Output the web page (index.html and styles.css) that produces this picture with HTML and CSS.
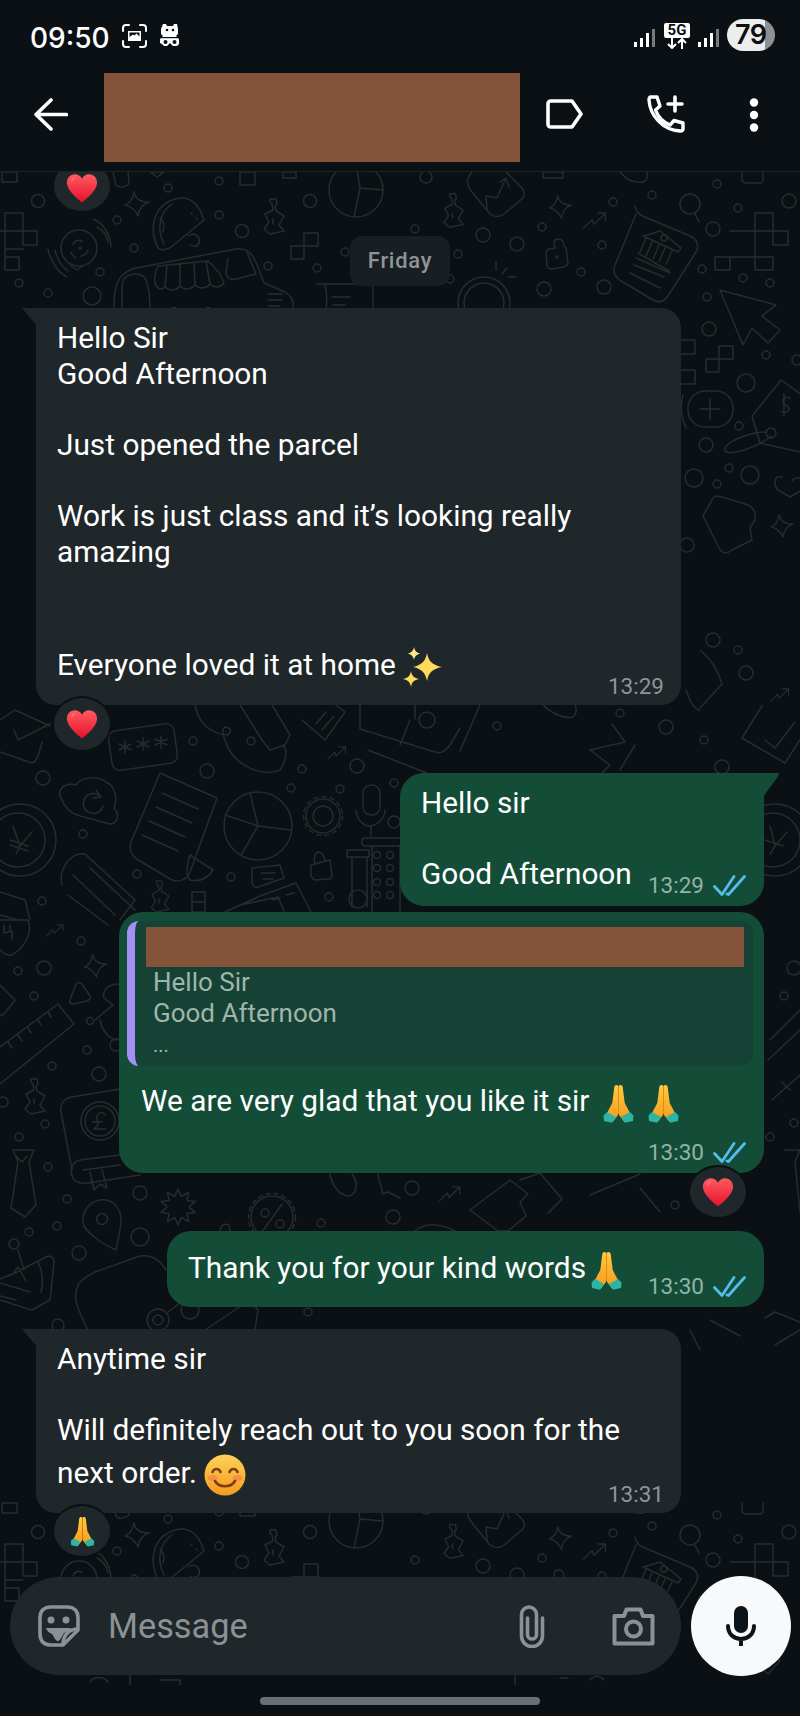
FILE: index.html
```html
<!DOCTYPE html>
<html lang="en">
<head>
<meta charset="utf-8">
<title>Chat</title>
<link rel="stylesheet" href="styles.css">
</head>
<body>
<svg class="defs" width="0" height="0" aria-hidden="true">
  <defs>
    <linearGradient id="heartFill" x1="0" y1="0" x2="0" y2="1"><stop offset="0" stop-color="#ff5a5f"/><stop offset="1" stop-color="#e8112d"/></linearGradient>
    <linearGradient id="handFill" x1="0" y1="0" x2="0" y2="1"><stop offset="0" stop-color="#ffcb3d"/><stop offset="1" stop-color="#f59a1e"/></linearGradient>
    <linearGradient id="smileFill" x1="0" y1="0" x2="0" y2="1"><stop offset="0" stop-color="#ffd257"/><stop offset="1" stop-color="#f49a20"/></linearGradient>
    <symbol id="e-heart" viewBox="0 0 32 30"><path fill="url(#heartFill)" d="M16 29.5C10 24 1 17.5.4 9.5.1 4 4 .3 8.600.3c3.200 0 5.900 1.700 7.400 4.700C17.500 2 20.200.3 23.400.3c4.600 0 8.500 3.700 8.200 9.200C31 17.500 22 24 16 29.500Z"/><path fill="#ff9a9c" opacity=".55" d="M5 6c1-2 3-3 5-2.500-2 .5-3 2-3.500 4-.5 1-2 0-1.500-1.500Z"/></symbol>
    <symbol id="e-pray" viewBox="0 0 32 39">
      <path fill="url(#handFill)" d="M15.600 1.500c-2-1.200-3.400-.3-3.800 1.500L9.800 19 5 28l-1.500 5.500 7 4 5-6.500Z"/>
      <path fill="url(#handFill)" d="M16.400 1.500c2-1.200 3.400-.3 3.800 1.500L22.200 19 27 28l1.500 5.500-7 4-5-6.500Z"/>
      <path fill="#e88a12" d="M15.500 2h1v28h-1z"/>
      <path fill="#2cb5a5" d="M4.500 28 1 31.500l.5 5.500 8 1.800 4-5.800Zm23 0 3.500 3.500-.5 5.500-8 1.800-4-5.800Z"/>
    </symbol>
    <symbol id="e-sparkle" viewBox="0 0 40 40">
      <path fill="#ffd95a" d="M24 6c1.500 8 5 12 15 14-10 2-13.500 6-15 14-1.500-8-5-12-14-14 9-2 12.500-6 14-14Z"/>
      <path fill="#ffe98c" d="M11 0c.8 4 2.500 5.500 6 6.500-3.500 1-5.200 2.500-6 6.500-.8-4-2.500-5.500-6-6.500 3.500-1 5.200-2.500 6-6.500Z"/>
      <path fill="#ffd95a" d="M8 24c.9 5 3 7 8 8-5 1-7.100 3-8 8-.9-5-3-7-8-8 5-1 7.100-3 8-8Z"/>
    </symbol>
    <symbol id="e-smile" viewBox="0 0 42 42">
      <circle cx="21" cy="21" r="20.500" fill="url(#smileFill)"/>
      <ellipse cx="8.500" cy="24" rx="5" ry="3" fill="#f8735a" opacity=".6"/><ellipse cx="33.500" cy="24" rx="5" ry="3" fill="#f8735a" opacity=".6"/>
      <path fill="none" stroke="#7a3e12" stroke-width="2.600" stroke-linecap="round" d="M8.500 18c1.500-4 6.500-4 8 0M25.500 18c1.500-4 6.500-4 8 0M11 27c4 7 16 7 20 0"/>
    </symbol>
    <symbol id="i-check" viewBox="0 0 33 21"><path fill="none" stroke="#53bdeb" stroke-width="2.800" stroke-linecap="round" stroke-linejoin="round" d="M1.500 11.500 9 19.500 21 1.500M14 19 15.500 19.500 31.500 1.500"/></symbol>
    <symbol id="i-signal" viewBox="0 0 21 18">
      <rect x="0" y="13" width="3" height="5" fill="#fff"/><rect x="6" y="9" width="3" height="9" fill="#fff"/><rect x="12" y="4" width="3" height="14" fill="#fff"/><rect x="18" y="0" width="3" height="18" fill="#77797b"/>
    </symbol>

    <symbol id="d-star" viewBox="0 0 26 26" overflow="visible"><path d="M10 1C11 7 16 11 25 11 18 13 15 18 14 25 12 20 7 15 1 14 6 12 9 7 10 1Z"/></symbol>
    <symbol id="d-bottle" viewBox="0 0 26 36" overflow="visible"><path d="M9 1h6l1 5-2 2 1 5 8 5-5 9 5 6-14 3-6-5 5-7-4-8 8-4-1-6-2-2Z"/><path d="M12 21v5"/></symbol>
    <symbol id="d-sq" viewBox="0 0 28 28" overflow="visible"><path d="M14 1h14v13H14zM1 14h13v13H1z"/></symbol>
    <symbol id="d-trend" viewBox="0 0 26 18" overflow="visible"><path d="M1 17 10 8l2 5L23 2M16 1h8v8"/></symbol>

    <g id="band" class="doodle">
      <!-- top band, repeats further down the wall -->
      <circle cx="38" cy="201" r="6.500"/><circle cx="168" cy="188" r="4"/><circle cx="219" cy="181" r="4"/><circle cx="219" cy="215" r="4"/><circle cx="310" cy="201" r="6.500"/><circle cx="117" cy="220" r="4"/><circle cx="242" cy="231" r="6.500"/><circle cx="134" cy="248" r="4"/><circle cx="100" cy="272" r="4"/><circle cx="19" cy="283" r="4"/><circle cx="48" cy="293" r="4"/><circle cx="92" cy="296" r="9"/><circle cx="268" cy="266" r="4"/><circle cx="317" cy="268" r="4"/><circle cx="345" cy="252" r="4"/>
      <circle cx="426" cy="177" r="6"/><circle cx="415" cy="229" r="4"/><circle cx="483" cy="235" r="7"/><circle cx="517" cy="244" r="7"/><circle cx="458" cy="254" r="4"/><circle cx="542" cy="227" r="4"/><circle cx="613" cy="202" r="4"/><circle cx="652" cy="195" r="4"/><circle cx="602" cy="245" r="4"/><circle cx="581" cy="272" r="4"/><circle cx="544" cy="289" r="7"/><circle cx="604" cy="287" r="7"/><circle cx="450" cy="279" r="4"/><circle cx="717" cy="184" r="4"/><circle cx="738" cy="208" r="4"/><circle cx="789" cy="201" r="7"/><circle cx="713" cy="229" r="7"/><circle cx="702" cy="269" r="4"/><circle cx="743" cy="278" r="4"/><circle cx="770" cy="283" r="4"/><circle cx="707" cy="297" r="4"/>
      <!-- cross tile left -->
      <path d="M5 213h18v18H5zM23 231h14v14H23zM5 231v18h18M5 257h14v13H5zM-5 231h10M5 249v8"/>
      <!-- star -->
      <use href="#d-star" x="124" y="191" width="26" height="26"/>
      <!-- taco -->
      <path d="M158 248C149 230 152 206 175 199 190 195 199 204 204 220L170 248C165 250 160 250 158 248Z"/>
      <path d="M164 244C156 228 160 212 172 204M160 218c3 3 5 8 3 14M191 213l1 1M196 218l1 1"/>
      <path d="M188 236c6-4 13 0 11 7-1 4-6 4-9 2"/>
      <!-- radio bubble -->
      <circle cx="79" cy="248" r="18"/><path d="M70 265 77 270 82 266M73 245c1-4 5-6 9-4M88 250c-1 3-3 6-7 6M71 252c1 3 3 5 5 6"/><path d="M93 219c10 4 17 14 18 28M97 227c6 3 10 9 11 15M48 249c3 14 11 24 19 28M55 250c2 9 7 17 13 21"/><circle cx="80" cy="248" r="1"/>
      <!-- truck -->
      <path d="M114 312C113 282 120 272 136 268L236 249C246 248 251 252 256 262L264 283 285 292C294 298 295 305 291 312"/>
      <path d="M228 259 226 272C226 278 230 280 236 279L256 274 247 252"/>
      <path d="M122 312V286C122 274 136 272 143 276 148 280 150 296 150 312"/>
      <path d="M155 283C154 275 156 270 158 266L208 261C216 268 222 276 224 283 220 288 214 288 210 284 206 289 199 289 195 285 191 290 184 290 180 286 176 291 169 291 165 287 161 291 157 289 155 283ZM167 265 165 287M180 263 180 286M194 262 195 285M206 261 210 284"/>
      <path d="M268 294h14M268 300h14M268 306h12"/>
      <path d="M170 312c1-6 7-6 9 0M204 312c1-6 7-6 9 0"/>
      <!-- bottle, pie, squares -->
      <use href="#d-bottle" x="261" y="198" width="26" height="36"/>
      <use href="#d-sq" x="290" y="232" width="28" height="28"/>
      <circle cx="356" cy="190" r="27"/><path d="M356 163 360 188 383 190M360 188 354 217M370 172l-2-14 18-2 6 10Z"/>
      <path d="M357 172c-1-4 0-8 3-8"/>
      <!-- clip at top -->
      <path d="M240 172h15v13h-15zM283 172h13v6h-13zM2 172h15v10H2zM113 172l3 13c2 3 8 3 13-1l-1-12"/>
      <path d="M150 172h14l-7 5Z"/>
      <!-- chart card -->
      <path d="M472 172C466 180 466 184 472 192L490 214C496 218 500 217 504 214L523 198C525 194 525 192 522 188L506 172"/>
      <path d="M487 209 486 196 497 198 506 178M500 182l6-4 3 9"/>
      <use href="#d-bottle" x="441" y="192" width="25" height="36"/>
      <use href="#d-star" x="548" y="195" width="25" height="24"/>
      <use href="#d-trend" x="582" y="212" width="26" height="17"/>
      <!-- lock -->
      <path d="M555 240c6-3 9 1 9 6l2 2 2 14c0 3-2 4-4 5l-12 2c-3 0-5-1-5-4l-1-12c0-2 2-4 4-4l5-1c-1-3-1-7 0-8Z"/><circle cx="557" cy="257" r="1"/>
      <!-- magnifier -->
      <circle cx="690" cy="204" r="10"/><path d="M695 214 699 222"/>
      <!-- bank doc -->
      <path d="M635 206C637 214 640 215 645 217L690 236C698 240 699 246 696 252L668 296C664 302 659 303 653 300L621 281C614 276 612 271 615 265L636 214"/>
      <path d="M644 236 660 231 681 248 678 252 643 236ZM646 238 640 252M652 242 646 256M659 245 653 259M665 248 659 262M672 251 666 264M638 253 669 271M636 258 670 273M634 265 664 277M630 273 660 288"/>
      <circle cx="664" cy="238" r="3"/>
      <!-- cross tile right -->
      <path d="M755 213h18v18h-18zM773 231h15v14h-15zM730 231h25v26M755 231v26h18v13h-18v-13h-40v13h15v-13"/>
      <!-- clips -->
      <path d="M742 172v7c0 3 2 4 5 4h13c2 0 3-2 3-4v-7"/>
      <path d="M620 172l6 6c3 3 12 5 17 4 3-1 4-3 4-6v-4"/>
      <path d="M543 172h20v6h-20z"/>
      <!-- cursor -->
      <path d="M720 290 776 305 762 316 780 330 768 343 752 328 743 345Z"/>
      <!-- ring with rays -->
      <circle cx="484" cy="303" r="26"/><circle cx="484" cy="303" r="20"/><path d="M496 262v8M507 268l-5 6M516 277h-8"/>
      <!-- message -->
      <path d="M317 284h52c3 0 4 2 4 5v21M325 284c1 6 3 12 1 26M350 297h-18M345 305h-12"/>
    </g>
  </defs>
</svg>

<main class="phone">
  <div class="status">
    <div class="status-left">
      <span class="clock">09:50</span>
      <svg class="ic-shot" viewBox="0 0 25 24"><path fill="none" stroke="#fff" stroke-width="2" stroke-linecap="round" d="M1 7V4c0-2 1-3 3-3h3M18 1h3c2 0 3 1 3 3v3M24 17v3c0 2-1 3-3 3h-3M7 23H4c-2 0-3-1-3-3v-3"/><path fill="#fff" d="M6 7h13v10H6z"/><path fill="#0b1014" d="M7.500 8.500h10v4l-3-3-2 2-1.500-1-3.500 2.500Z"/></svg>
      <svg class="ic-pet" viewBox="0 0 20 24"><path fill="#fff" d="M3 0h3l1 2h6l1-2h3l1 5v5l-2 2 3 3v5l-2 2h-4l-3-3-3 3H4l-2-2-2-1v-4l3-3-2-2V5Z"/><circle cx="7" cy="6" r="1.300" fill="#0b1014"/><circle cx="13" cy="6" r="1.300" fill="#0b1014"/><path fill="#0b1014" d="M1 13h18v1.200H1z"/><circle cx="5.500" cy="18" r="2" fill="#0b1014"/><circle cx="14.500" cy="18" r="2" fill="#0b1014"/></svg>
    </div>
    <div class="status-right">
      <svg class="ic-signal"><use href="#i-signal"/></svg>
      <div class="fiveg">
        <span class="fiveg-label">5G</span>
        <svg class="fiveg-arrows" viewBox="0 0 22 11"><path fill="none" stroke="#fff" stroke-width="2" d="M6 0v10M2 6l4 4 4-4M16 11V1M12 5l4-4 4 4"/></svg>
      </div>
      <svg class="ic-signal"><use href="#i-signal"/></svg>
      <div class="battery">79</div>
    </div>
  </div>

  <header class="topbar">
    <svg class="ic-back" viewBox="0 0 34 33"><path fill="none" stroke="#fff" stroke-width="3.600" stroke-linecap="round" stroke-linejoin="round" d="M17 2 2 16.500 17 31M2.500 16.500H32.500"/></svg>
    <div class="redact redact-title"></div>
    <svg class="ic-label" viewBox="0 0 37 30"><path fill="none" stroke="#fff" stroke-width="3.600" stroke-linejoin="round" d="M5 2H26L35 15 26 28H5C3 28 2 27 2 25V5C2 3 3 2 5 2Z"/></svg>
    <svg class="ic-call" viewBox="0 0 38 38"><path fill="none" stroke="#fff" stroke-width="3.400" stroke-linejoin="round" d="M4 2H10L13 11 8.500 15C11 22 16 27 23 30L27 25.500 36 28V34C36 35.500 35 36 33 36 16 35 3 21 2 5 2 3 3 2 4 2Z"/><path fill="none" stroke="#fff" stroke-width="3.600" stroke-linecap="round" d="M28 2V16M21 9H35"/></svg>
    <svg class="ic-more" viewBox="0 0 10 34"><circle cx="5" cy="4.500" r="4.200" fill="#fff"/><circle cx="5" cy="17" r="4.200" fill="#fff"/><circle cx="5" cy="29.500" r="4.200" fill="#fff"/></svg>
  </header>

  <section class="chat">
    <svg class="wall" viewBox="0 172 800 1513" aria-hidden="true">
      <use href="#band"/>
      <use href="#band" y="1331"/>
      <g class="doodle">
        <!-- right strip -->
        <use href="#d-sq" x="705" y="345" width="28" height="28"/>
        <path d="M680 340h15v14h-15zM680 370h15v14h-15z"/>
        <circle cx="709" cy="329" r="7"/><circle cx="766" cy="355" r="4"/><circle cx="746" cy="383" r="9"/><circle cx="739" cy="426" r="4"/><circle cx="706" cy="445" r="7"/><circle cx="729" cy="468" r="4"/><circle cx="750" cy="475" r="9"/><circle cx="694" cy="478" r="9"/><circle cx="717" cy="484" r="4"/><circle cx="687" cy="545" r="7"/><circle cx="797" cy="360" r="5"/>
        <rect x="688" y="391" width="45" height="36" rx="17"/><path d="M700 409h20M710 399v20"/>
        <path d="M683 395c-3 10-2 22 3 33"/>
        <path d="M781 380 802 395M781 380 752 416 760 443 800 452"/><path d="M790 398c-4-2-8 0-7 4 1 4 7 3 6 8-1 3-6 3-8 1M784 394v22"/>
        <circle cx="771" cy="433" r="5"/><path d="M767 432C750 432 724 442 725 450 727 458 760 446 771 436"/>
        <path d="M782 477C774 474 773 485 778 490L790 497 802 490"/><path d="M802 479c-5-3-9 0-10 2"/>
        <path d="M713 498 703 516 718 546C722 555 727 554 732 550L752 540 750 528 755 520C757 510 750 505 745 504L722 497C718 496 715 495 713 498Z"/>
        <use href="#d-star" x="770" y="514" width="24" height="24"/>
        <path d="M700 650c10 8 18 20 22 34l-22 24M686 690c4 12 8 20 14 20"/>
        <use href="#d-trend" x="770" y="688" width="20" height="14"/>
        <circle cx="738" cy="650" r="4"/><circle cx="713" cy="640" r="7"/><circle cx="746" cy="673" r="7"/><circle cx="704" cy="740" r="4"/><circle cx="666" cy="727" r="7"/><circle cx="722" cy="767" r="7"/><circle cx="620" cy="713" r="4"/><circle cx="497" cy="726" r="4"/>
        <path d="M762 706 742 738 785 763 805 732"/><path d="M765 740 775 748 795 722"/>
        <!-- band under the first bubble -->
        <path d="M0 720 15 710 50 726M0 752 32 763C36 762 38 758 42 742M14 730 18 740 50 724"/>
        <rect x="110" y="727" width="66" height="40" rx="8" transform="rotate(-8 143 747)"/>
        <path d="M125 741v12M119 744l12 6M119 750l12-6M143 738v12M137 741l12 6M137 747l12-6M161 736v12M155 739l12 6M155 745l12-6"/>
        <circle cx="193" cy="741" r="4"/><circle cx="251" cy="741" r="4"/><circle cx="207" cy="771" r="7"/><circle cx="302" cy="769" r="4"/><circle cx="357" cy="766" r="7"/><circle cx="291" cy="788" r="4"/><circle cx="340" cy="789" r="4"/><circle cx="394" cy="783" r="4"/><circle cx="394" cy="822" r="6"/><circle cx="83" cy="834" r="4"/><circle cx="137" cy="874" r="4"/><circle cx="231" cy="877" r="4"/><circle cx="42" cy="901" r="4"/><circle cx="329" cy="897" r="4"/><circle cx="43" cy="778" r="7"/>
        <path d="M195 705C198 722 210 734 228 735 232 730 230 728 226 727 222 727 222 733 225 740 232 765 262 778 280 770 286 762 288 750 283 745"/>
        <path d="M240 705 262 740 270 750 285 745 290 735 272 705"/>
        <path d="M302 720 325 740 345 712 336 705M316 724 326 712M322 730 334 716"/>
        <use href="#d-trend" x="327" y="742" width="20" height="22"/>
        <path d="M360 705v24L435 752C440 754 445 752 450 745L460 728M368 750 470 790M480 705l-20 46"/>
        <path d="M410 720 400 745M415 705v14"/>
        <circle cx="427" cy="720" r="8"/>
        <path d="M543 705c8 8 20 14 30 12 4-4 4-8 2-12"/>
        <path d="M612 724 625 742 590 750 610 765 590 785M635 745 620 770"/>
        <!-- coin -->
        <circle cx="20" cy="840" r="36"/><circle cx="18" cy="840" r="27"/><path d="M13 826 20 846 32 832M20 846 16 854M10 840 28 846M10 845 28 851"/>
        <circle cx="775" cy="840" r="36"/><circle cx="773" cy="840" r="27"/><path d="M770 826 775 846 787 832M775 846 770 854M765 840 783 846"/>
        <!-- cloud -->
        <path d="M62 800C55 790 65 782 76 785 82 776 98 776 106 782 115 786 118 798 114 808 120 814 118 824 110 824L80 816C72 814 65 808 62 800Z"/>
        <path d="M100 796A10 10 0 1 0 103 806M96 790l5 7-8 1"/>
        <!-- receipt -->
        <path d="M160 773 217 798 190 872C186 881 178 882 172 880L138 860C131 855 129 848 131 842Z"/>
        <path d="M190 880c10 2 18-2 23-10L190 855C186 868 186 876 190 880Z"/>
        <path d="M162 793l36 16M156 807l36 16M149 821l36 16M142 835l36 16"/>
        <!-- pie -->
        <circle cx="258" cy="826" r="34"/><path d="M250 793 258 826 225 815M258 826 241 855M258 826 291 830"/>
        <!-- gear -->
        <circle cx="323" cy="816" r="10"/><circle cx="323" cy="816" r="17"/><circle cx="323" cy="816" r="19.500" stroke-dasharray="4 4.200"/>
        <!-- mic -->
        <rect x="363" y="785" width="17" height="30" rx="8"/><path d="M356 810c1 12 10 17 15 16s14-6 14-16M371 826v10"/>
        <!-- lock -->
        <path d="M311 865 330 860 332 875C332 878 330 879 328 879L316 880C313 880 312 878 311 875ZM315 864c-2-6 0-11 3-12 4 0 6 3 7 9"/>
        <!-- test tube and calculator -->
        <path d="M347 850h22v7h-22zM352 857v50M367 857v50"/><circle cx="358" cy="899" r="9"/>
        <rect x="362" y="838" width="50" height="8" rx="3"/>
        <path d="M372 846v66M400 846v66"/>
        <circle cx="377" cy="855" r="3.500"/><circle cx="390" cy="855" r="3.500"/><circle cx="377" cy="868" r="3.500"/><circle cx="390" cy="868" r="3.500"/><circle cx="377" cy="882" r="3.500"/><circle cx="390" cy="882" r="3.500"/><circle cx="377" cy="895" r="3.500"/><circle cx="390" cy="895" r="3.500"/>
        <!-- pencil -->
        <path d="M62 885C58 870 70 852 85 854L135 900 120 920M68 895 108 925M90 868 135 910M73 875 115 915"/>
        <!-- small bottle -->
        <use href="#d-bottle" x="148" y="880" width="24" height="32"/>
        <path d="M192 892h13v20h-13zM192 902h13"/>
        <!-- register -->
        <path d="M252 868 280 865 284 878 258 887C254 888 252 885 252 882ZM261 873h14M263 879h10"/>
        <path d="M225 912 260 896 296 883 311 912M240 905l38-8 6 14M272 900l8-2M286 895l8-2"/>
        <path d="M0 892 25 900 30 920M0 915 18 920"/>
        <!-- left column below -->
        <path d="M0 920 28 920C32 930 28 945 12 955 8 956 3 953 0 950"/>
        <path d="M4 925v8l8-2v8M10 925v6"/>
        <use href="#d-trend" x="42" y="924" width="26" height="13"/>
        <circle cx="81" cy="941" r="4"/><circle cx="44" cy="968" r="7"/><circle cx="18" cy="971" r="4"/><circle cx="34" cy="996" r="4"/><circle cx="87" cy="1050" r="4"/><circle cx="52" cy="1066" r="4"/><circle cx="99" cy="1074" r="7"/><circle cx="3" cy="1102" r="5"/><circle cx="45" cy="1124" r="4"/><circle cx="19" cy="1137" r="4"/><circle cx="48" cy="1167" r="4"/><circle cx="67" cy="1199" r="4"/><circle cx="140" cy="1193" r="7"/><circle cx="57" cy="1226" r="4"/><circle cx="29" cy="1232" r="4"/><circle cx="140" cy="1237" r="9"/><circle cx="79" cy="1253" r="7"/>
        <use href="#d-star" x="83" y="954" width="25" height="24"/>
        <path d="M76 984C78 982 80 982 82 984L90 996C91 999 89 1000 87 1001L73 1004C70 1004 69 1002 70 1000Z"/>
        <path d="M0 985 15 1000 4 1014 0 1016"/>
        <path d="M0 1047 58 1004 74 1024 0 1084M8 1042l4 6M18 1035l4 6M28 1028l3 5M38 1020l3 5M48 1012l3 5"/>
        <path d="M120 984C108 984 102 990 104 998L113 1005 95 1020"/><circle cx="90" cy="1021" r="3.500"/><circle cx="116" cy="1045" r="6"/><path d="M100 1020c2 10 8 18 16 20"/>
        <use href="#d-bottle" x="22" y="1078" width="26" height="36"/>
        <path d="M120 1089 72 1097C64 1098 60 1104 61 1112L72 1170"/>
        <circle cx="100" cy="1121" r="19"/><circle cx="100" cy="1121" r="15"/><path d="M105 1115c-2-4-8-3-8 2l1 8-4 4h12M93 1122h9"/>
        <path d="M120 1155 80 1160C72 1162 70 1170 72 1176 74 1182 80 1184 88 1183L140 1175M83 1170 120 1165M90 1172 94 1190 100 1184 107 1188 102 1170"/>
        <path d="M13 1150h21l-5 12 7 43-11 12-14-9 7-46ZM16 1156l6 6 5-6"/>
        <path d="M100 1200C112 1198 122 1208 121 1222 120 1232 118 1240 116 1250 106 1246 90 1236 84 1226 80 1214 88 1202 100 1200Z"/><circle cx="102" cy="1219" r="5.500"/>
        <path d="M0 1279 17 1272 48 1256C52 1256 54 1258 54 1262L50 1300 32 1310 0 1300M0 1283 30 1292M0 1296 16 1300M38 1262c4 8 6 20 3 30M12 1275l6-8M18 1267l8 14"/>
        <circle cx="14" cy="1244" r="5"/><path d="M18 1250 24 1270"/>
        <!-- rounded card -->
        <path d="M88 1330C78 1310 72 1298 78 1285 82 1278 88 1276 95 1272L140 1256C152 1254 160 1260 166 1270"/>
        <circle cx="158" cy="1320" r="11"/><circle cx="158" cy="1320" r="5"/><path d="M168 1312 184 1300 176 1298"/>
        <circle cx="190" cy="1310" r="9"/>
        <path d="M205 1330 250 1300 258 1310 255 1330"/>
        <!-- band above thanks -->
        <path transform="translate(178 1207)" d="M0-18 3.400-10.500 10.600-14.600 8.900-6.500 17.100-5.600 11 0 17.100 5.600 8.900 6.500 10.600 14.600 3.400 10.500 0 18-3.400 10.500-10.600 14.600-8.900 6.500-17.100 5.600-11 0-17.100-5.600-8.900-6.500-10.600-14.600-3.400-10.500Z"/>
        <circle cx="272" cy="1217" r="21"/><circle cx="272" cy="1217" r="23.500" stroke-dasharray="4 4"/><path d="M282 1204 262 1232"/><circle cx="265" cy="1213" r="4"/><circle cx="280" cy="1224" r="4"/>
        <circle cx="321" cy="1223" r="4"/><circle cx="393" cy="1217" r="7"/><circle cx="412" cy="1188" r="7"/><circle cx="308" cy="1312" r="4"/><circle cx="58" cy="1325" r="6"/><circle cx="675" cy="1205" r="4"/>
        <path d="M220 1231c1-6 5-8 9-6l1 6"/>
        <path d="M330 1174c2 10 8 22 20 22 8-4 8-14 2-22"/>
        <path d="M378 1174c0 10 6 14 4 20l6-2 12 6M415 1231c10-8 24-8 40 0"/>
        <use href="#d-trend" x="437" y="1186" width="26" height="16"/>
        <path d="M470 1210l40-30 18 14-8 8 6 14-18 15h-10Z"/>
        <path d="M520 1180l20-7 22 26-14 14"/>
        <path d="M590 1195 640 1174M640 1188 660 1212M785 1150h15l-5 12 5 50"/>
        <circle cx="784" cy="996" r="4"/><circle cx="794" cy="968" r="7"/><circle cx="794" cy="1123" r="4"/><circle cx="770" cy="1137" r="4"/>
        <path d="M800 1010 770 1040M800 1030 768 1060M772 1100 800 1075M790 1090l-8-8"/>
        <path d="M765 1318 775 1312 800 1322M775 1345 800 1330"/>
        <path d="M690 1330 700 1350M710 1320l30 16"/>
        <!-- strip below composer -->
        <path d="M90 1682c4-6 14-6 18 0M130 1675v10M160 1680h20v5M470 1672h45v13M560 1678h8M590 1680c4-5 10-5 14 0"/>
      </g>
    </svg>

    <div class="thread">
      <div class="react react-top"><svg class="em-heart"><use href="#e-heart"/></svg></div>
      <div class="date">Friday</div>

      <article class="bubble in in-first">
        <p>Hello Sir<br>Good Afternoon<br><br>Just opened the parcel<br><br>Work is just class and it’s looking really amazing<br><br><br></p>
        <p class="tall">Everyone loved it at home <svg class="em-inline em-sparkle"><use href="#e-sparkle"/></svg></p>
        <span class="time">13:29</span>
      </article>
      <div class="react react-in"><svg class="em-heart"><use href="#e-heart"/></svg></div>

      <article class="bubble out out-tail out-hello">
        <p>Hello sir<br><br>Good Afternoon</p>
        <span class="time">13:29<svg class="tick"><use href="#i-check"/></svg></span>
      </article>

      <article class="bubble out out-quote">
        <div class="quote">
          <div class="redact redact-quote"></div>
          <div class="quote-text">Hello Sir<br>Good Afternoon<br><span class="quote-more">...</span></div>
        </div>
        <p class="after-quote">We are very glad that you like it sir <svg class="em-inline em-pray em-gap"><use href="#e-pray"/></svg> <svg class="em-inline em-pray em-gap"><use href="#e-pray"/></svg></p>
        <span class="time">13:30<svg class="tick"><use href="#i-check"/></svg></span>
      </article>
      <div class="react react-out"><svg class="em-heart"><use href="#e-heart"/></svg></div>

      <article class="bubble out out-thanks">
        <p>Thank you for your kind words<svg class="em-inline em-pray em-tight"><use href="#e-pray"/></svg></p>
        <span class="time">13:30<svg class="tick"><use href="#i-check"/></svg></span>
      </article>

      <article class="bubble in in-last">
        <p>Anytime sir<br><br>Will definitely reach out to you soon for the</p>
        <p class="tall">next order. <svg class="em-inline em-smile"><use href="#e-smile"/></svg></p>
        <span class="time">13:31</span>
      </article>
      <div class="react react-in react-pray"><svg class="em-rpray"><use href="#e-pray"/></svg></div>
    </div>

    <div class="composer">
      <div class="field">
        <svg class="ic-sticker" viewBox="0 0 42 42"><path fill="none" stroke="#8b9296" stroke-width="3.600" stroke-linejoin="round" d="M13 2H29C36 2 40 6 40 13V25L25 40H13C6 40 2 36 2 29V13C2 6 6 2 13 2Z"/><path fill="none" stroke="#8b9296" stroke-width="3.600" d="M40 24C31 24 25 30 25 40"/><circle cx="13" cy="15" r="3.500" fill="#8b9296"/><circle cx="28" cy="15" r="3.500" fill="#8b9296"/><path fill="#8b9296" d="M8 23H33C31 26 28 27 26 28 24 31 22 36 20 36 17 36 16 31 14 29 11 28 9 26 8 23Z"/></svg>
        <span class="placeholder">Message</span>
        <svg class="ic-clip" viewBox="0 0 28 43"><path fill="none" stroke="#8b9296" stroke-width="3.600" stroke-linecap="round" d="M9.500 13V29.500a4.500 4.500 0 0 0 9 0V9.500a7.500 7.500 0 0 0-15 0V31a10.500 10.500 0 0 0 21 0V13"/></svg>
        <svg class="ic-cam" viewBox="0 0 43 39"><path fill="none" stroke="#8b9296" stroke-width="4" stroke-linejoin="round" d="M2.500 9H12L14.500 2.500H28.500L31 9H40.500V36.500H2.500Z"/><circle cx="21.500" cy="22" r="7.500" fill="none" stroke="#8b9296" stroke-width="4"/></svg>
      </div>
      <div class="mic">
        <svg class="ic-mic" viewBox="0 0 30 40"><rect x="8" y="0" width="14" height="27" rx="7" fill="#0b141a"/><path fill="none" stroke="#0b141a" stroke-width="4" stroke-linecap="round" d="M2 20C2 28 8 33 15 33S28 28 28 20M15 33V39"/></svg>
      </div>
    </div>
  </section>

  <footer class="navbar"><div class="home"></div></footer>
</main>
</body>
</html>
```

FILE: styles.css
```css
* { box-sizing: border-box; }
html, body { margin: 0; padding: 0; background: #0b1014; }
body { width: 800px; height: 1716px; overflow: hidden; font-family: Roboto, "Liberation Sans", sans-serif; color: #fff; }
.defs { position: absolute; }
.phone { display: flex; flex-direction: column; width: 800px; height: 1716px; background: #0b1014; }

.status { height: 73px; flex: none; display: flex; justify-content: space-between; padding: 19px 25px 0 30px; }
.status-left { display: flex; align-items: flex-start; }
.clock { font-family: Inter, Roboto, sans-serif; font-size: 28px; font-weight: 500; line-height: 32px; margin-top: 3px; width: 92px; }
.ic-shot { width: 25px; height: 24px; margin-top: 5px; }
.ic-pet { width: 20px; height: 24px; margin: 5px 0 0 13px; }
.status-right { display: flex; align-items: flex-start; }
.ic-signal { width: 21px; height: 18px; margin-top: 10px; }
.fiveg { width: 26px; margin: 4px 8px 0 9px; display: flex; flex-direction: column; }
.fiveg-label { display: block; height: 15px; background: #fff; color: #0b1014; border-radius: 2px; font: 700 15px/15px Roboto, sans-serif; text-align: center; }
.fiveg-arrows { width: 22px; height: 11px; margin: 0 2px; }
.battery { width: 48px; height: 32px; margin-left: 8px; border-radius: 16px; background: linear-gradient(90deg, #eceded 0, #eceded 38px, #8f9091 38px); color: #0b1014; font: 600 27px/32px Inter, Roboto, sans-serif; padding-left: 8px; letter-spacing: -.5px; }

.topbar { height: 99px; flex: none; display: flex; align-items: flex-start; padding-left: 34px; border-bottom: 1px solid #1c2226; position: relative; z-index: 3; background: #0b1014; }
.ic-back { width: 34px; height: 33px; margin-top: 25px; }
.redact { background: #84533a; }
.redact-title { width: 416px; height: 89px; margin-left: 36px; }
.ic-label { width: 37px; height: 30px; margin: 26px 0 0 26px; }
.ic-call { width: 38px; height: 38px; margin: 22px 0 0 64px; }
.ic-more { width: 10px; height: 34px; margin: 25px 0 0 64px; }

.chat { position: relative; flex: 1; min-height: 0; display: flex; flex-direction: column; overflow: hidden; }
.wall { position: absolute; left: 0; top: 0; width: 800px; height: 1513px; }
.doodle, .wall { fill: none; stroke: #272c2f; stroke-width: 1.5; stroke-linecap: round; stroke-linejoin: round; }
.thread { position: relative; flex: 1; display: flex; flex-direction: column; align-items: flex-start; }

.react { width: 56px; height: 52px; border-radius: 50%; background: #1f272a; box-shadow: 0 0 0 2px #0b1014; display: flex; align-items: center; justify-content: center; position: relative; z-index: 2; }
.react-top { margin: -11px 0 0 54px; height: 50px; padding-top: 4px; }
.react-in { margin: -7px 0 0 54px; }
.react-pray { height: 50px; }
.react-out { margin: -6px 0 0 690px; height: 50px; }
.em-heart { width: 32px; height: 29px; }
.em-rpray { width: 25px; height: 31px; }

.date { margin: 25px 0 22px 350px; width: 100px; height: 50px; border-radius: 12px; background: #181e22; color: #8e9599; font-size: 22px; font-weight: 500; line-height: 50px; letter-spacing: .7px; text-align: center; }

.bubble { position: relative; font-size: 29.800px; line-height: 35.6px; padding: 12px 21px 0; }
.bubble p { margin: 0; }
.bubble p.tall { margin-top: 7px; }
.in { background: #1f272a; border-radius: 0 20px 20px 20px; width: 645px; margin-left: 36px; }
.in::before { content: ""; position: absolute; left: -14px; top: 0; width: 15px; height: 18px; background: #1f272a; clip-path: polygon(0 0, 100% 0, 100% 100%); }
.out { background: #144d37; border-radius: 24px; margin-left: auto; margin-right: 36px; }
.in-first { height: 397px; }
.in-last { height: 184px; margin-top: 22px; }
.out-hello { width: 364px; height: 133px; margin-top: 23px; border-top-right-radius: 0; }
.out-tail::before { content: ""; position: absolute; right: -15px; top: 0; width: 16px; height: 24px; background: #144d37; clip-path: polygon(0 0, 100% 0, 90% 18%, 0 100%); }
.out-quote { width: 645px; height: 261px; margin-top: 6px; padding: 9px 11px 0 8px; }
.out-thanks { width: 597px; height: 76px; margin-top: 14px; padding-top: 19px; }

.time { position: absolute; right: 17px; bottom: 7px; display: flex; align-items: center; font-size: 22.500px; line-height: 24px; color: #8d9599; }
.out .time { color: #93b3a6; right: 18px; bottom: 9px; }
.tick { width: 33px; height: 21px; margin-left: 9px; }

.em-inline { vertical-align: middle; margin-top: -10px; margin-bottom: -10px; }
.em-sparkle { width: 40px; height: 40px; }
.em-pray { width: 33px; height: 39px; }
.em-gap { margin-left: 5px; }
.em-tight { margin-left: 4px; }
.em-smile { width: 42px; height: 42px; }

.quote { height: 145px; background: #154235; border-radius: 12px; border-left: 8px solid #a48ff5; padding: 6px 9px 0 11px; }
.redact-quote { width: 598px; height: 40px; }
.quote-text { font-size: 26px; line-height: 30.500px; color: #a0b5ab; padding-left: 7px; }
.quote-more { font-size: 20px; line-height: 30px; }
.after-quote { margin: 17px 0 0 14px !important; }

.composer { flex: none; height: 109px; display: flex; align-items: flex-start; padding-left: 10px; position: relative; }
.field { width: 671px; height: 98px; margin-top: 1px; border-radius: 49px; background: #1f272a; display: flex; align-items: center; padding-left: 28px; }
.ic-sticker { width: 42px; height: 42px; }
.placeholder { font-size: 34.300px; color: #8b9296; margin-left: 28px; flex: 1; }
.ic-clip { width: 28px; height: 43px; }
.ic-cam { width: 43px; height: 39px; margin: 0 26px 0 66px; }
.mic { width: 100px; height: 100px; margin-left: 10px; border-radius: 50%; background: #f8f9fa; display: flex; align-items: center; justify-content: center; }
.ic-mic { width: 30px; height: 40px; }

.navbar { height: 31px; flex: none; display: flex; justify-content: center; padding-top: 12px; background: #0b1014; }
.home { width: 280px; height: 8px; border-radius: 4px; background: #6b7074; }
```
